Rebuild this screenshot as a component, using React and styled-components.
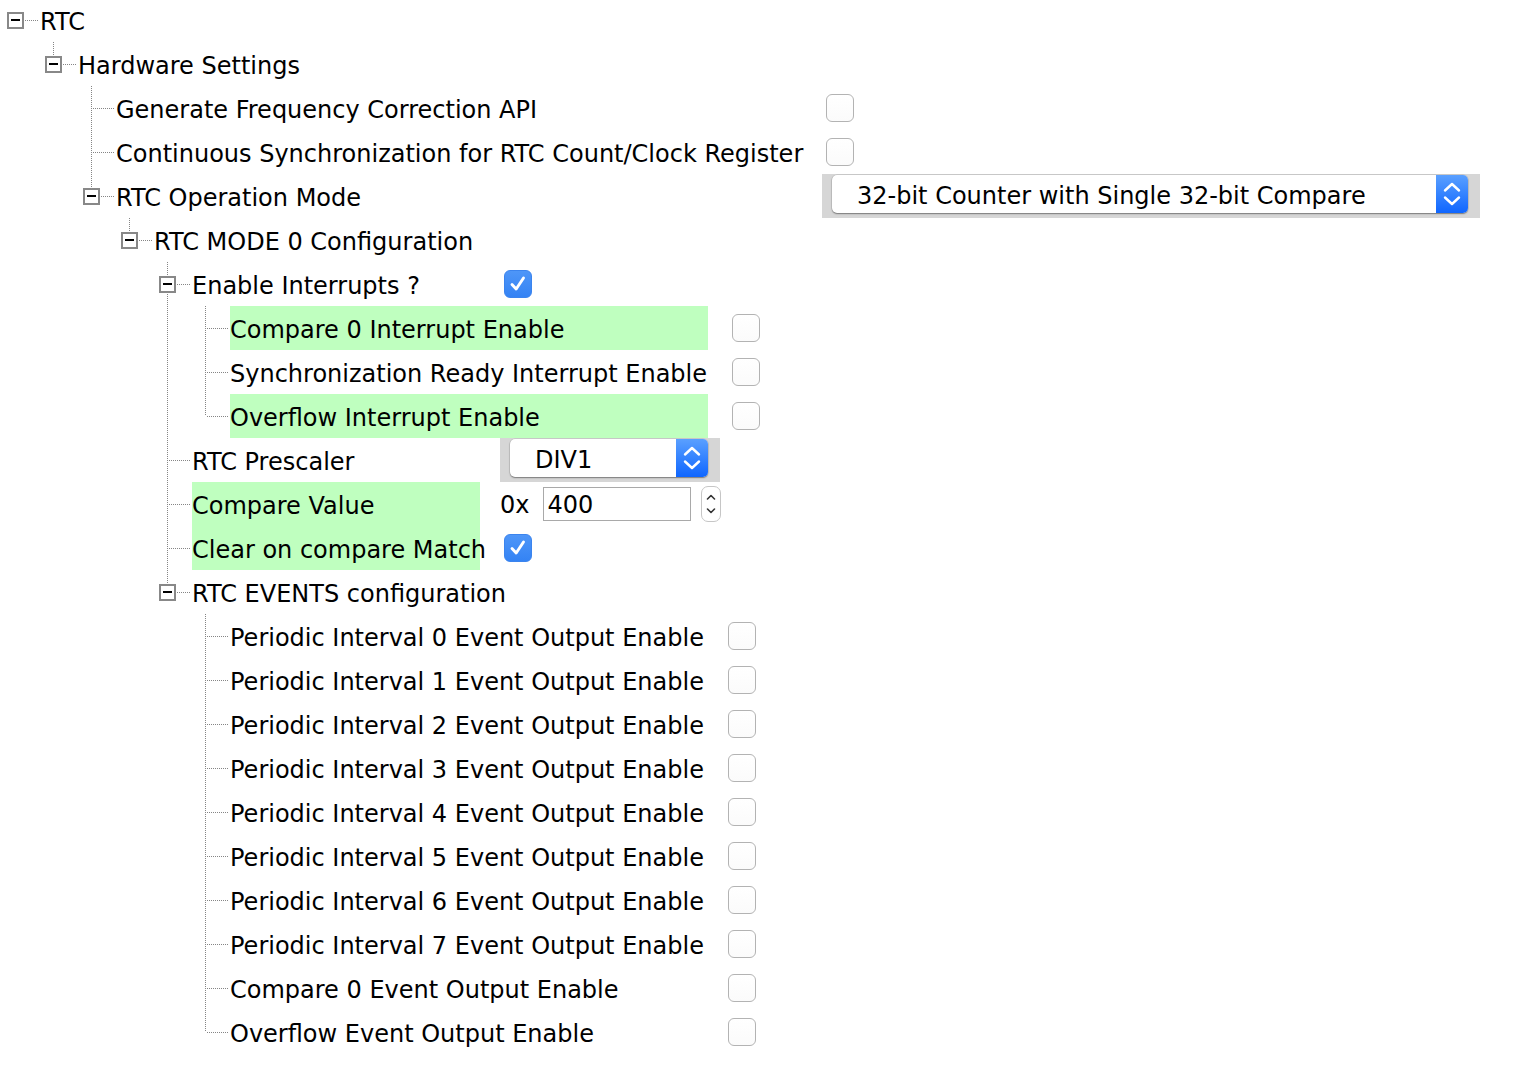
import React from 'react'
import styled, { createGlobalStyle } from 'styled-components'

const GlobalStyle = createGlobalStyle`
  body {
    margin: 0;
    background: #ffffff;
    font-family: "DejaVu Sans", "Liberation Sans", sans-serif;
  }
`

const dots = (dir) => `repeating-linear-gradient(${dir}, #858585 0 1px, transparent 1px 2px)`

const guideBg = ({ $up, $down, $right }) => {
  const layers = []
  if ($up) layers.push([dots('to bottom'), '15px 0', '1px 22px'])
  if ($down) layers.push([dots('to bottom'), '15px 22px', '1px 22px'])
  if ($right) layers.push([dots('to right'), '17px 22px', '21px 1px'])
  if (!layers.length) return 'background: none;'
  return `
    background-repeat: no-repeat;
    background-image: ${layers.map((l) => l[0]).join(', ')};
    background-position: ${layers.map((l) => l[1]).join(', ')};
    background-size: ${layers.map((l) => l[2]).join(', ')};
  `
}

const Tree = styled.div`
  display: flex;
  flex-direction: column;
  margin-top: -2px;
  font-size: 24px;
  color: #000;
`

const Row = styled.div`
  display: flex;
  align-items: center;
  height: 44px;
`

const Guide = styled.span`
  flex: none;
  width: 38px;
  height: 44px;
  box-sizing: border-box;
  padding-left: 7px;
  display: flex;
  align-items: center;
  ${guideBg}
`

const Expander = styled.span`
  width: 17px;
  height: 17px;
  box-sizing: border-box;
  border: 2px solid #888888;
  background: #fff;
  display: flex;
  align-items: center;
  justify-content: center;
  &::after {
    content: '';
    width: 9px;
    height: 2px;
    background: #000;
  }
`

const Label = styled.span`
  flex: none;
  margin-left: 2px;
  height: 44px;
  line-height: 48px;
  white-space: nowrap;
  width: ${(p) => (p.$width ? `${p.$width}px` : 'auto')};
  background: ${(p) => (p.$highlight ? '#bfffbf' : 'transparent')};
`

const Control = styled.div`
  flex: none;
  margin-left: 20px;
  display: flex;
  align-items: center;
`

const Box = styled.span`
  margin-left: 4px;
  width: 28px;
  height: 28px;
  box-sizing: border-box;
  border-radius: 6px;
  display: flex;
  align-items: center;
  justify-content: center;
  ${(p) =>
    p.$checked
      ? 'background: linear-gradient(#4e96f8, #3483f4); border: 1px solid #3b84ee;'
      : 'background: linear-gradient(#ffffff, #fbfbfb); border: 1px solid #b3b3b3;'}
`

const ComboWell = styled.div`
  width: ${(p) => p.$width}px;
  height: 44px;
  box-sizing: border-box;
  padding: 1px 12px 5px 10px;
  background: #d6d6d6;
  display: flex;
`

const ComboBox = styled.div`
  flex: 1;
  display: flex;
  height: 38px;
  background: #fff;
  border-radius: 5px;
  overflow: hidden;
  box-shadow: 0 1px 1.5px rgba(0, 0, 0, 0.4), 0 0 0 0.5px rgba(0, 0, 0, 0.12);
`

const ComboText = styled.span`
  flex: 1;
  padding-left: 25px;
  line-height: 42px;
  white-space: nowrap;
`

const ComboButton = styled.span`
  flex: none;
  width: 32px;
  background: linear-gradient(#5aa0ff, #0f66ff);
  display: flex;
  align-items: center;
  justify-content: center;
`

const Prefix = styled.span`
  margin-right: 14px;
  padding-top: 2px;
`

const HexInput = styled.input`
  width: 148px;
  height: 34px;
  box-sizing: border-box;
  border: 1px solid #a9a9a9;
  border-radius: 0;
  padding: 2px 0 0 3px;
  font: inherit;
  color: #000;
  outline: none;
  background: #fff;
`

const Spinner = styled.span`
  margin-left: 10px;
  width: 20px;
  height: 36px;
  box-sizing: border-box;
  border: 1px solid #c6c6c6;
  border-radius: 7px;
  display: flex;
  align-items: center;
  justify-content: center;
`

const Checkbox = ({ checked }) => (
  <Box $checked={checked}>
    {checked && (
      <svg width="22" height="22" viewBox="0 0 22 22">
        <path d="M5 11.5 L9.2 16 L16.5 5" fill="none" stroke="#fff" strokeWidth="2.9" strokeLinecap="round" strokeLinejoin="round" />
      </svg>
    )}
  </Box>
)

const Combo = ({ width, value }) => (
  <ComboWell $width={width}>
    <ComboBox>
      <ComboText>{value}</ComboText>
      <ComboButton>
        <svg width="20" height="28" viewBox="0 0 20 28">
          <path d="M3 10.5 L10 4 L17 10.5 M3 17.5 L10 24 L17 17.5" fill="none" stroke="#fff" strokeWidth="2.4" strokeLinecap="round" strokeLinejoin="round" />
        </svg>
      </ComboButton>
    </ComboBox>
  </ComboWell>
)

const HexField = ({ value }) => (
  <>
    <Prefix>0x</Prefix>
    <HexInput readOnly value={value} />
    <Spinner>
      <svg width="12" height="26" viewBox="0 0 12 26">
        <path d="M2.5 8 L6 4.5 L9.5 8 M2.5 18 L6 21.5 L9.5 18" fill="none" stroke="#333" strokeWidth="1.6" strokeLinecap="round" strokeLinejoin="round" />
      </svg>
    </Spinner>
  </>
)

const check = (checked = false) => ({ type: 'check', checked })

const periodic = [0, 1, 2, 3, 4, 5, 6, 7].map((n) => ({
  label: `Periodic Interval ${n} Event Output Enable`,
  width: 474,
  control: check(),
}))

const tree = {
  label: 'RTC',
  children: [
    {
      label: 'Hardware Settings',
      children: [
        { label: 'Generate Frequency Correction API', width: 686, control: check() },
        { label: 'Continuous Synchronization for RTC Count/Clock Register', width: 686, control: check() },
        {
          label: 'RTC Operation Mode',
          width: 686,
          control: { type: 'combo', width: 658, value: '32-bit Counter with Single 32-bit Compare' },
          children: [
            {
              label: 'RTC MODE 0 Configuration',
              children: [
                {
                  label: 'Enable Interrupts ?',
                  width: 288,
                  control: check(true),
                  children: [
                    { label: 'Compare 0 Interrupt Enable', width: 478, highlight: true, control: check() },
                    { label: 'Synchronization Ready Interrupt Enable', width: 478, control: check() },
                    { label: 'Overflow Interrupt Enable', width: 478, highlight: true, control: check() },
                  ],
                },
                { label: 'RTC Prescaler', width: 288, control: { type: 'combo', width: 220, value: 'DIV1' } },
                { label: 'Compare Value', width: 288, highlight: true, control: { type: 'hex', value: '400' } },
                { label: 'Clear on compare Match', width: 288, highlight: true, control: check(true) },
                {
                  label: 'RTC EVENTS configuration',
                  children: [
                    ...periodic,
                    { label: 'Compare 0 Event Output Enable', width: 474, control: check() },
                    { label: 'Overflow Event Output Enable', width: 474, control: check() },
                  ],
                },
              ],
            },
          ],
        },
      ],
    },
  ],
}

const renderControl = (control) => {
  if (!control) return null
  if (control.type === 'check') return <Checkbox checked={control.checked} />
  if (control.type === 'combo') return <Combo width={control.width} value={control.value} />
  return <HexField value={control.value} />
}

// flatten the tree into rows, carrying which ancestor lines continue through each row
const flatten = (node, depth, guides, isLast, rows) => {
  rows.push({ node, depth, guides, isLast })
  const kids = node.children || []
  const nextGuides = [...guides, depth > 0 && !isLast]
  kids.forEach((kid, i) => flatten(kid, depth + 1, nextGuides, i === kids.length - 1, rows))
  return rows
}

const TreeRow = ({ node, depth, guides, isLast }) => (
  <Row>
    {guides.map((through, i) => (
      <Guide key={i} $up={through} $down={through} />
    ))}
    <Guide $up={depth > 0} $down={depth > 0 && !isLast} $right>
      {node.children && <Expander />}
    </Guide>
    <Label $width={node.width} $highlight={node.highlight}>
      {node.label}
    </Label>
    {node.control && <Control>{renderControl(node.control)}</Control>}
  </Row>
)

export default function App() {
  const rows = flatten(tree, 0, [], true, [])
  return (
    <>
      <GlobalStyle />
      <Tree>
        {rows.map((r, i) => (
          <TreeRow key={i} {...r} />
        ))}
      </Tree>
    </>
  )
}
